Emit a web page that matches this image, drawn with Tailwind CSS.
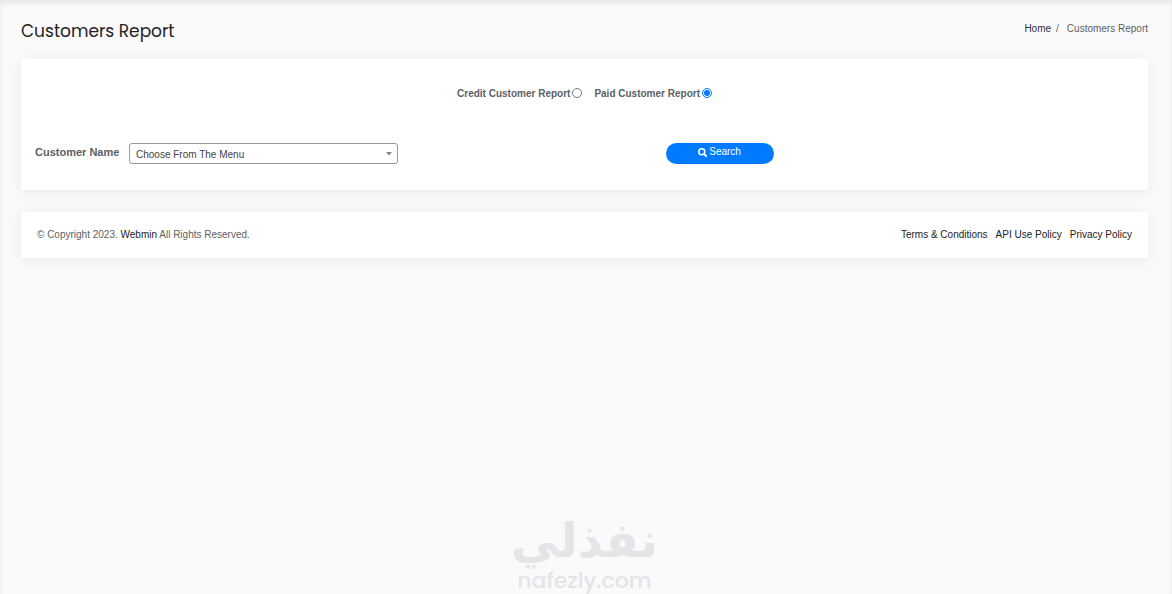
<!DOCTYPE html>
<html lang="en">
<head>
    <meta charset="UTF-8">
    <meta name="viewport" content="width=device-width, initial-scale=1.0">
    <title>Customers Report</title>
    <script src="https://cdn.jsdelivr.net/npm/@tailwindcss/browser@4"></script>
</head>
<body class="min-h-screen flex flex-col bg-[#faf9fc] font-['Liberation_Sans',Arial,sans-serif] text-[10px] leading-4 text-[#5c5f63] shadow-[inset_0_3px_5px_rgba(0,0,0,0.08)]">
    <div class="flex-1 flex flex-col pl-[21px] pr-6">
        <!-- Page header -->
        <header class="flex items-start justify-between pt-5 pb-4">
            <h1 class="font-['Poppins','Inter',sans-serif] text-[17px] leading-[23px] text-[#222]">Customers Report</h1>
            <nav aria-label="Breadcrumb" class="flex gap-1 pt-px">
                <a href="#" class="text-[#333]">Home</a>
                <span class="pl-px">/</span>
                <span class="pl-1">Customers Report</span>
            </nav>
        </header>

        <!-- Search form -->
        <main class="bg-white rounded-xs shadow-[0_2px_14px_rgba(0,0,0,0.07)]">
            <form class="px-[14px] pt-[27px] pb-[26px]">
                <div class="flex justify-center gap-3 font-bold">
                    <label class="flex items-center gap-0.5">Credit Customer Report
                        <input type="radio" name="report" value="credit" class="size-[10px] mb-0.5">
                    </label>
                    <label class="flex items-center gap-0.5">Paid Customer Report
                        <input type="radio" name="report" value="paid" class="size-[10px] mb-0.5" checked>
                    </label>
                </div>

                <div class="mt-[41px] grid grid-cols-[4fr_3fr] gap-1.5 items-center">
                    <div class="flex items-center">
                        <label for="customer" class="w-[94px] shrink-0 pb-[3px] text-[11px] font-bold">Customer Name</label>
                        <div class="relative">
                            <select id="customer" class="block appearance-none w-[269px] h-[21px] pl-1.5 pt-0.5 border border-[#999] rounded-[3px] bg-white text-[#444]">
                                <option>Choose From The Menu</option>
                            </select>
                            <svg class="absolute right-1.5 top-[9px] pointer-events-none" width="6" height="4" viewBox="0 0 6 4"><path d="M0 0h6L3 3.500z" fill="#888"/></svg>
                        </div>
                    </div>
                    <button type="submit" class="w-[108px] h-[21px] pb-[3px] flex items-center justify-center gap-0.5 rounded-full bg-[#007bff] font-['Liberation_Sans',Arial,sans-serif] text-white">
                        <svg width="9" height="9" viewBox="0 0 9 9" fill="none" stroke="currentColor" stroke-width="1.600"><circle cx="3.800" cy="3.800" r="3"/><path d="M6 6l2.200 2.200" stroke-width="1.800" stroke-linecap="round"/></svg>
                        Search
                    </button>
                </div>
            </form>
        </main>

        <!-- Footer -->
        <footer class="mt-[22px] px-4 py-[15px] flex justify-between bg-white shadow-[0_2px_14px_rgba(0,0,0,0.07)]">
            <p>© Copyright 2023. <a href="#" class="text-[#222]">Webmin</a> All Rights Reserved.</p>
            <nav class="flex gap-2 text-[#222]">
                <a href="#">Terms &amp; Conditions</a>
                <a href="#">API Use Policy</a>
                <a href="#">Privacy Policy</a>
            </nav>
        </footer>

        <!-- Watermark -->
        <div class="mt-auto flex flex-col items-center text-[#e5e4e7]">
            <span lang="ar" dir="rtl" class="font-['DejaVu_Sans',sans-serif] font-bold text-[48px] leading-[56px]">نفذلي</span>
            <span class="font-['Poppins','Inter',sans-serif] font-medium text-[22px] leading-[26px]">nafezly.com</span>
        </div>
    </div>
</body>
</html>
